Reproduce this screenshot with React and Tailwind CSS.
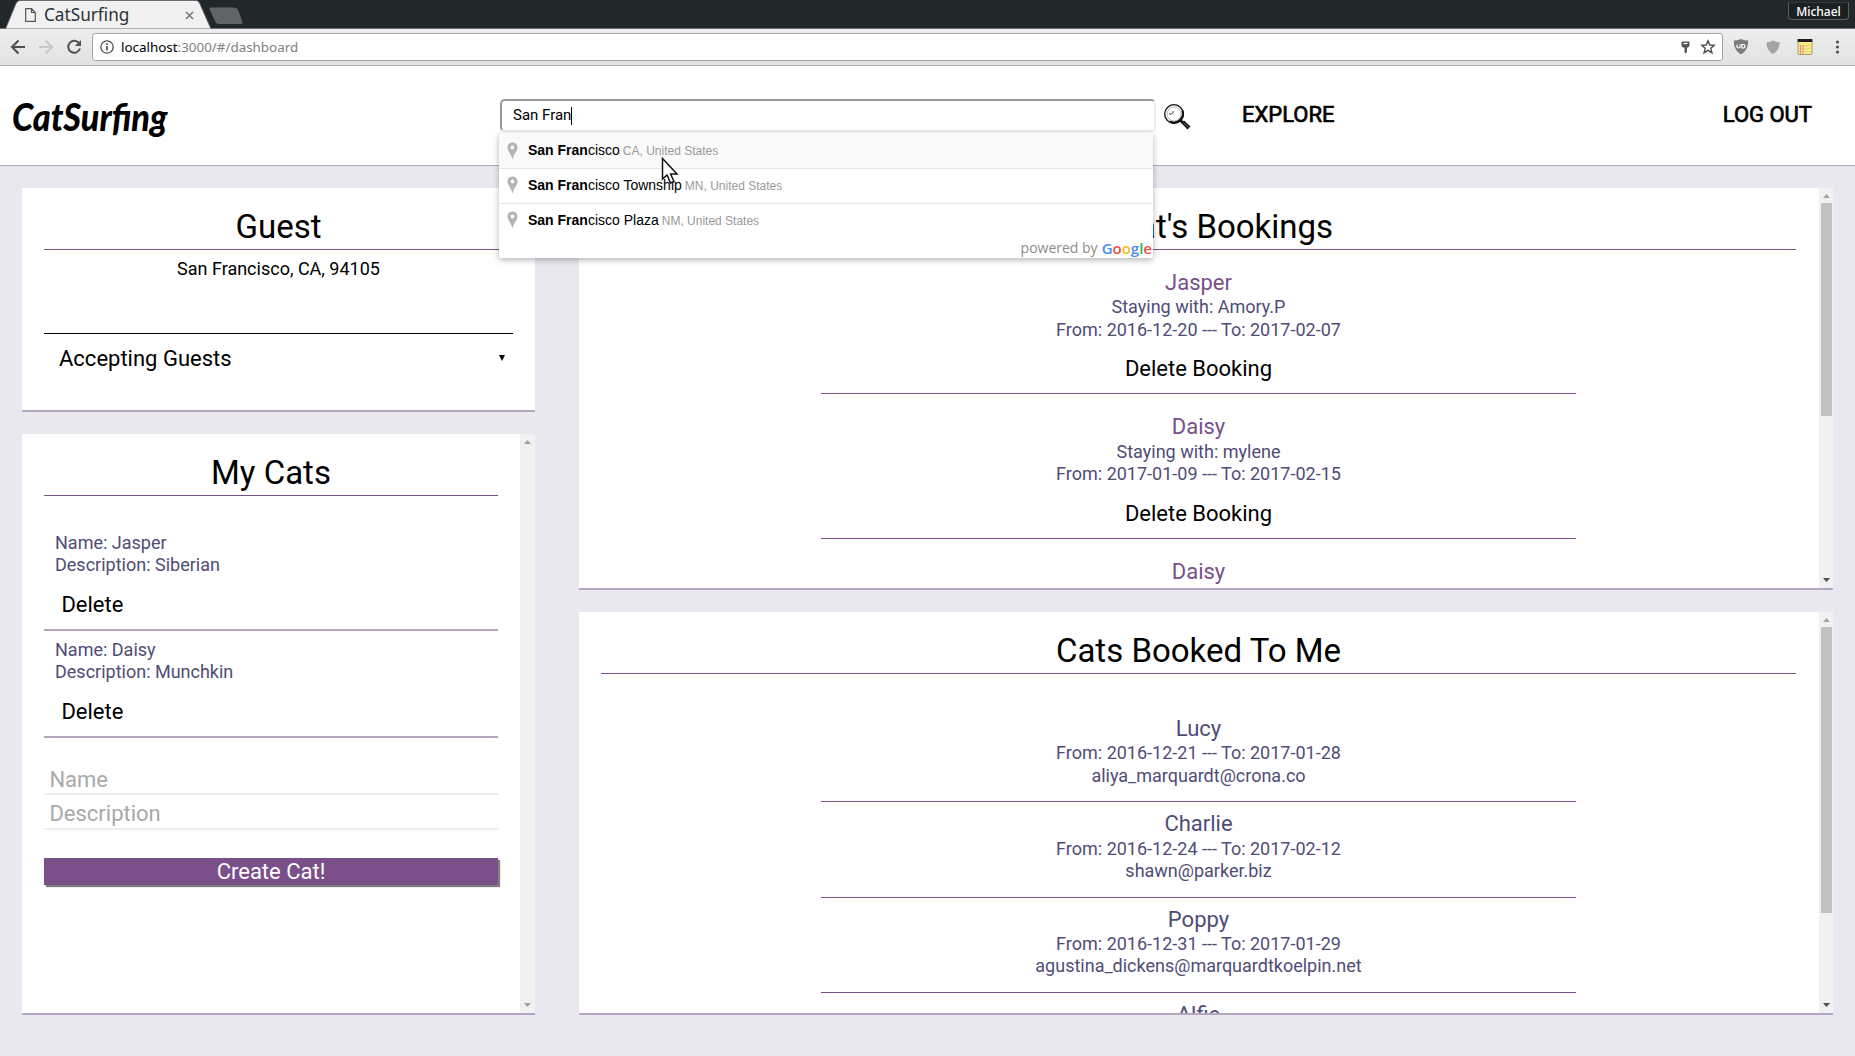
import React from "react";

function TabStrip() {
  return (
    <div className="flex h-7 items-start justify-between bg-[#222829]">
      <div className="relative flex h-7 w-[250px] shrink-0">
        <svg className="absolute inset-0" width="250" height="29" viewBox="0 0 250 29">
          <path d="M5.5 29 L16 3.5 Q17.500 .5 20 .5 H196 Q198.500 .5 199.500 3 L211 29 Z" fill="#f2f1f1" stroke="#6b6e70" strokeWidth="1" />
          <path d="M211 7.500 H234 Q237 7.500 238 10 L242.500 22 Q243 24 241 24 H219 Q216.500 24 215.500 22 L209.500 9 Q209 7.500 211 7.500 Z" fill="#606466" />
        </svg>
        <div className="relative flex h-7 items-center pl-[25px]">
          <svg width="11" height="14" viewBox="0 0 11 14" className="mt-0.5" fill="none" stroke="#555" strokeWidth="1.200">
            <path d="M.7 .7 H6.500 L10.300 4.500 V13.300 H.7 Z M6.500 .7 V4.500 H10.300" />
          </svg>
          <span className="ml-2 w-[140px] pt-px font-['Noto_Sans',sans-serif] text-[17.2px] leading-7 text-[#2b3338]">CatSurfing</span>
          <svg width="9" height="9" viewBox="0 0 9 9" className="mt-0.5 ml-px" stroke="#777" strokeWidth="1.500">
            <path d="M1 1 L8 8 M8 1 L1 8" />
          </svg>
        </div>
      </div>
      <div className="mt-[2px] mr-[6px] flex h-[18px] w-[61px] items-center justify-center rounded-b border border-[#5a5e60] border-t-[#33393b] bg-[#1b2021] pt-[2px] font-['Noto_Sans',sans-serif] text-[12px] leading-4 font-medium text-white">
        Michael
      </div>
    </div>
  );
}

function Toolbar() {
  return (
    <div className="flex h-[38px] items-center border-t border-b border-t-[#6b6e70] border-b-[#b0b0b0] bg-linear-to-b from-[#efeeee] to-[#e2e2e2]">
      <svg width="92" height="28" viewBox="0 0 92 28" fill="none" strokeWidth="2" className="shrink-0">
        <path d="M25 14 H12.500 M18.500 7.500 L12 14 L18.500 20.500" stroke="#505050" />
        <path d="M39 14 H51.500 M45.500 7.500 L52 14 L45.500 20.500" stroke="#c8c8c8" />
        <path d="M79.300 10.500 A6 6 0 1 0 80 15.500" stroke="#505050" />
        <path d="M81 7 V13 H75 Z" fill="#505050" />
      </svg>
      <div className="flex h-7 flex-1 items-center rounded-[3px] border border-[#a3a3a3] bg-white pr-[6px] pl-[7px]">
        <svg width="14" height="14" viewBox="0 0 14 14" fill="none" stroke="#505050">
          <circle cx="7" cy="7" r="6.200" strokeWidth="1.300" />
          <path d="M7 6 V10.500 M7 3.300 V5" strokeWidth="1.700" />
        </svg>
        <span className="ml-[7px] flex-1 font-['Noto_Sans',sans-serif] text-[13.4px] leading-6 text-[#808080]">
          <span className="text-black">localhost</span>:3000/#/dashboard
        </span>
        <svg width="9" height="13" viewBox="0 0 9 13" className="mr-[10px]">
          <path d="M.5 .5 H8.500 V5 L7 6.500 H6 V11 L4.500 12.500 L3.500 11.500 V6.500 H2 L.5 5 Z" fill="#555" />
          <path d="M2.500 2.500 H6.500" stroke="#fff" strokeWidth="1.200" />
        </svg>
        <svg width="16" height="16" viewBox="0 0 16 16">
          <path d="M8 1.800 L9.700 6 L14.300 6.300 L10.800 9.300 L11.900 13.700 L8 11.300 L4.100 13.700 L5.200 9.300 L1.700 6.300 L6.300 6 Z" fill="none" stroke="#4d4d4d" strokeWidth="1.400" />
        </svg>
      </div>
      <svg width="132" height="20" viewBox="0 0 132 20" className="shrink-0">
        <path d="M18 2 Q22 3.500 25.200 3.500 Q25.500 13 18 17.500 Q10.500 13 10.800 3.500 Q14 3.500 18 2 Z" fill="#7b7b7b" />
        <path d="M14 7.500 V9.800 Q14 11 15.500 11 Q17 11 17 9.800 V7.500 M18.800 7.500 V11 H20 Q22 11 22 9.200 Q22 7.500 20 7.500 Z" fill="none" stroke="#fff" strokeWidth="1.200" />
        <path d="M50 3.500 Q53 5.500 56.500 5.300 Q56.800 13.500 50 17 Q43.200 13.500 43.500 5.300 Q47 5.500 50 3.500 Z" fill="#a5a5a5" />
        <rect x="75" y="2.500" width="14" height="15" rx="1" fill="#f8ea85" stroke="#8d8a74" strokeWidth=".8" />
        <rect x="74.600" y="2" width="14.800" height="3" fill="#1c1c1c" />
        <path d="M76 8.500 H88.500 M76 11.500 H88.500 M76 14.500 H88.500" stroke="#ddd08a" strokeWidth=".8" />
        <path d="M77.500 8 V17 M80 8 V17" stroke="#ef8f6f" strokeWidth="1" />
        <g fill="#505050">
          <circle cx="114.500" cy="5" r="1.600" />
          <circle cx="114.500" cy="10" r="1.600" />
          <circle cx="114.500" cy="15" r="1.600" />
        </g>
      </svg>
    </div>
  );
}

function Pin() {
  return (
    <svg width="11" height="18" viewBox="0 0 11 18" className="mr-[10px] ml-2 shrink-0">
      <path fillRule="evenodd" d="M5.500 .5 C8.500 .5 10.500 2.700 10.500 5.500 C10.500 9.500 6.800 11.500 5.500 17.500 C4.200 11.500 .5 9.500 .5 5.500 C.5 2.700 2.500 .5 5.500 .5 Z M5.500 3.600 A1.900 1.900 0 1 0 5.500 7.400 A1.900 1.900 0 1 0 5.500 3.600 Z" fill="#b4b4b4" />
    </svg>
  );
}

const suggestions = [
  { rest: "cisco", region: "CA, United States", row: "bg-[#fafafa]" },
  { rest: "cisco Township", region: "MN, United States", row: "border-t border-[#e6e6e6] pb-[2px]" },
  { rest: "cisco Plaza", region: "NM, United States", row: "border-t border-[#e6e6e6] pb-[2px]" },
];

function Suggestions() {
  return (
    <div className="absolute top-[34px] -left-px z-10 h-[125px] w-[654px] rounded-b-[2px] bg-white font-['Liberation_Sans',sans-serif] shadow-[0_2px_6px_rgba(0,0,0,0.3)]">
      {suggestions.map((s) => (
        <div key={s.rest} className={`flex h-[35px] items-center ${s.row}`}>
          <Pin />
          <span className="text-[14px] text-black">
            <b>San Fran</b>
            {s.rest}
          </span>
          <span className="ml-[3px] pt-px text-[12px] text-[#999]">{s.region}</span>
        </div>
      ))}
      <div className="flex h-5 items-center justify-end pr-px font-['Open_Sans',sans-serif] text-[14px] leading-5 font-medium text-[#8c8c8c]">
        <span className="mr-1">powered by</span>
        <span className="text-[15px] font-semibold">
          <span className="text-[#4a8af4]">G</span>
          <span className="text-[#ea5044]">o</span>
          <span className="text-[#f5bd1f]">o</span>
          <span className="text-[#4a8af4]">g</span>
          <span className="text-[#3bab5a]">l</span>
          <span className="text-[#ea5044]">e</span>
        </span>
      </div>
      <svg className="absolute top-[24px] left-[162px]" width="20" height="29" viewBox="0 0 20 29">
        <path d="M1.500 1.500 V22 L6 18 L9.500 26 L13 24.500 L9.600 17 H16 Z" fill="#fff" stroke="#111" strokeWidth="1.500" />
      </svg>
    </div>
  );
}

function Header() {
  return (
    <header className="flex h-[100px] items-start border-b border-[#b4a5c0] bg-white">
      <div className="w-[500px] pt-[26px] pl-[12px]">
        <span className="inline-block origin-left scale-x-[0.9] font-[Lato,sans-serif] text-[38px] leading-[48px] font-black italic">CatSurfing</span>
      </div>
      <div className="relative mt-[33px]">
        <div className="flex h-[33px] w-[656px] items-center rounded-[5px] border-2 border-[#999] border-r-[#eee] border-b-[#eee] bg-white pl-[11px] text-[15px]">
          San Fran
          <span className="h-[18px] w-px bg-black" />
        </div>
        <Suggestions />
      </div>
      <svg width="28" height="28" viewBox="0 0 28 28" className="mt-[37px] ml-[7px]">
        <circle cx="11" cy="11" r="9.300" fill="#fff" stroke="#111" strokeWidth="1.300" />
        <path d="M19.500 7.500 A9 9 0 0 1 7 18.500" fill="none" stroke="#111" strokeWidth="2.200" />
        <circle cx="11" cy="11" r="7" fill="none" stroke="#999" strokeWidth=".7" />
        <path d="M6.500 10 Q6 11.500 8 11.300 Q10.500 11 10.200 8" fill="none" stroke="#456" strokeWidth="1" />
        <path d="M17.500 17.500 L20 20" stroke="#111" strokeWidth="2.500" />
        <path d="M18.300 20 L24.500 26.500 L27.500 23.500 L21 17.500 Z" fill="#111" />
        <path d="M20.500 19.800 L25.500 24.200" stroke="#888" strokeWidth=".8" />
      </svg>
      <nav className="mt-[35px] ml-[51px] flex flex-1 justify-between pr-[43px] text-[22px] leading-[27px] [-webkit-text-stroke:0.7px_black]">
        <a>EXPLORE</a>
        <a>LOG OUT</a>
      </nav>
    </header>
  );
}

function Scrollbar({ width, thumb, active }) {
  return (
    <div className={`flex shrink-0 flex-col items-start bg-[#f1f1f1] ${width}`}>
      <svg width="7" height="15" viewBox="0 0 7 15" className="ml-1 shrink-0">
        <path d="M0 10 L3.500 6 L7 10 Z" fill="#a3a3a3" />
      </svg>
      <div className="flex-1">{thumb && <div className={`ml-[2px] w-[11px] bg-[#c1c1c1] ${thumb}`} />}</div>
      <svg width="7" height="15" viewBox="0 0 7 15" className="ml-1 shrink-0">
        <path d="M0 5 L3.500 9 L7 5 Z" fill={active ? "#505050" : "#a3a3a3"} />
      </svg>
    </div>
  );
}

function Title({ children }) {
  return <h2 className="h-[43px] border-b border-[#7a4f8a] text-center text-[33px] leading-[39px]">{children}</h2>;
}

const cats = [
  { name: "Jasper", description: "Siberian" },
  { name: "Daisy", description: "Munchkin" },
];

const bookings = [
  { name: "Jasper", host: "Amory.P", from: "2016-12-20", to: "2017-02-07" },
  { name: "Daisy", host: "mylene", from: "2017-01-09", to: "2017-02-15" },
  { name: "Daisy" },
];

const guests = [
  { name: "Lucy", from: "2016-12-21", to: "2017-01-28", email: "aliya_marquardt@crona.co" },
  { name: "Charlie", from: "2016-12-24", to: "2017-02-12", email: "shawn@parker.biz" },
  { name: "Poppy", from: "2016-12-31", to: "2017-01-29", email: "agustina_dickens@marquardtkoelpin.net" },
  { name: "Alfie" },
];

function GuestPanel() {
  return (
    <section className="h-[224px] border-b-2 border-[#b4a5c0] bg-white px-[22px] pt-[19px]">
      <Title>Guest</Title>
      <p className="mt-[7px] text-center text-[18px] leading-[23px]">San Francisco, CA, 94105</p>
      <div className="mt-[53px] flex items-center justify-between border-t border-black pt-[11px] pr-2 pl-[15px]">
        <span className="text-[22px] leading-[27px]">Accepting Guests</span>
        <svg width="6" height="6" viewBox="0 0 6 6" className="-mt-0.5">
          <path d="M0 0 H6 L3 6 Z" />
        </svg>
      </div>
    </section>
  );
}

function MyCats() {
  return (
    <section className="flex h-[581px] border-b-2 border-[#b4a5c0] bg-white">
      <div className="flex-1 px-[22px] pt-[19px]">
        <Title>My Cats</Title>
        <div className="mt-7">
          {cats.map((c) => (
            <div key={c.name} className="border-b-2 border-[#b4a5c0] pt-2 pb-[11px] pl-[11px] text-[18px] leading-[21px] text-[#504c76]">
              <p className="h-[22px]">Name: {c.name}</p>
              <p className="h-[22px]">Description: {c.description}</p>
              <p className="mt-[15px] pl-[6.4px] text-[22px] leading-[27px] text-black">Delete</p>
            </div>
          ))}
        </div>
        <div className="mt-7 text-[22px] leading-[27px] text-[#a9a9a9]">
          <p className="h-[29px] border-b-2 border-[#eee] pl-[5.4px]">Name</p>
          <p className="h-[35px] border-b-2 border-[#eee] pt-[5px] pl-[5.4px]">Description</p>
        </div>
        <div className="mt-7 bg-[#7a4f8a] text-center text-[22px] leading-[27px] text-white shadow-[2px_2px_1px_#808080]">Create Cat!</div>
      </div>
      <Scrollbar width="w-[15px]" />
    </section>
  );
}

function Bookings() {
  return (
    <section className="flex h-[402px] overflow-hidden border-b-2 border-[#b4a5c0] bg-white">
      <div className="h-[400px] flex-1 overflow-hidden pt-[19px] pr-[23px] pl-[22px]">
        <Title>My Cat&#39;s Bookings</Title>
        <div className="mx-auto -mt-[0.25px] w-[755px] text-center text-[18px] leading-[21px] text-[#504c76]">
          {bookings.map((b, i) => (
            <div key={i} className="border-b border-[#7a4f8a] pt-[19px] pb-[11.27px]">
              <h3 className="h-[27.2px] text-[22px] leading-[27px] text-[#7a4f8a]">{b.name}</h3>
              {b.host && (
                <>
                  <p className="h-[22.6px]">Staying with: {b.host}</p>
                  <p>From: {b.from} --- To: {b.to}</p>
                  <p className="mt-[15.6px] text-[22px] leading-[27px] text-black">Delete Booking</p>
                </>
              )}
            </div>
          ))}
        </div>
      </div>
      <Scrollbar width="w-[14px]" thumb="h-[213px]" active />
    </section>
  );
}

function BookedToMe() {
  return (
    <section className="flex h-[403px] overflow-hidden border-b-2 border-[#b4a5c0] bg-white">
      <div className="h-[401px] flex-1 overflow-hidden pt-[19px] pr-[23px] pl-[22px]">
        <Title>Cats Booked To Me</Title>
        <div className="mx-auto mt-[32.75px] w-[755px] text-center text-[18px] leading-[21px] text-[#504c76]">
          {guests.map((g) => (
            <div key={g.name} className="border-b border-[#7a4f8a] pt-2 pb-[15.4px]">
              <h3 className="h-[27.4px] text-[22px] leading-[27px]">{g.name}</h3>
              {g.email && (
                <>
                  <p className="h-[22.6px]">From: {g.from} --- To: {g.to}</p>
                  <p>{g.email}</p>
                </>
              )}
            </div>
          ))}
        </div>
      </div>
      <Scrollbar width="w-[14px]" thumb="h-[286px]" active />
    </section>
  );
}

export default function App() {
  return (
    <div className="flex h-[1056px] w-[1855px] flex-col overflow-hidden bg-[#e9e8ee] font-[Roboto,sans-serif] text-black">
      <TabStrip />
      <Toolbar />
      <Header />
      <main className="flex gap-11 px-[22px] pt-[22px]">
        <div className="flex w-[513px] flex-col gap-[22px]">
          <GuestPanel />
          <MyCats />
        </div>
        <div className="flex w-[1254px] flex-col gap-[22px]">
          <Bookings />
          <BookedToMe />
        </div>
      </main>
    </div>
  );
}
